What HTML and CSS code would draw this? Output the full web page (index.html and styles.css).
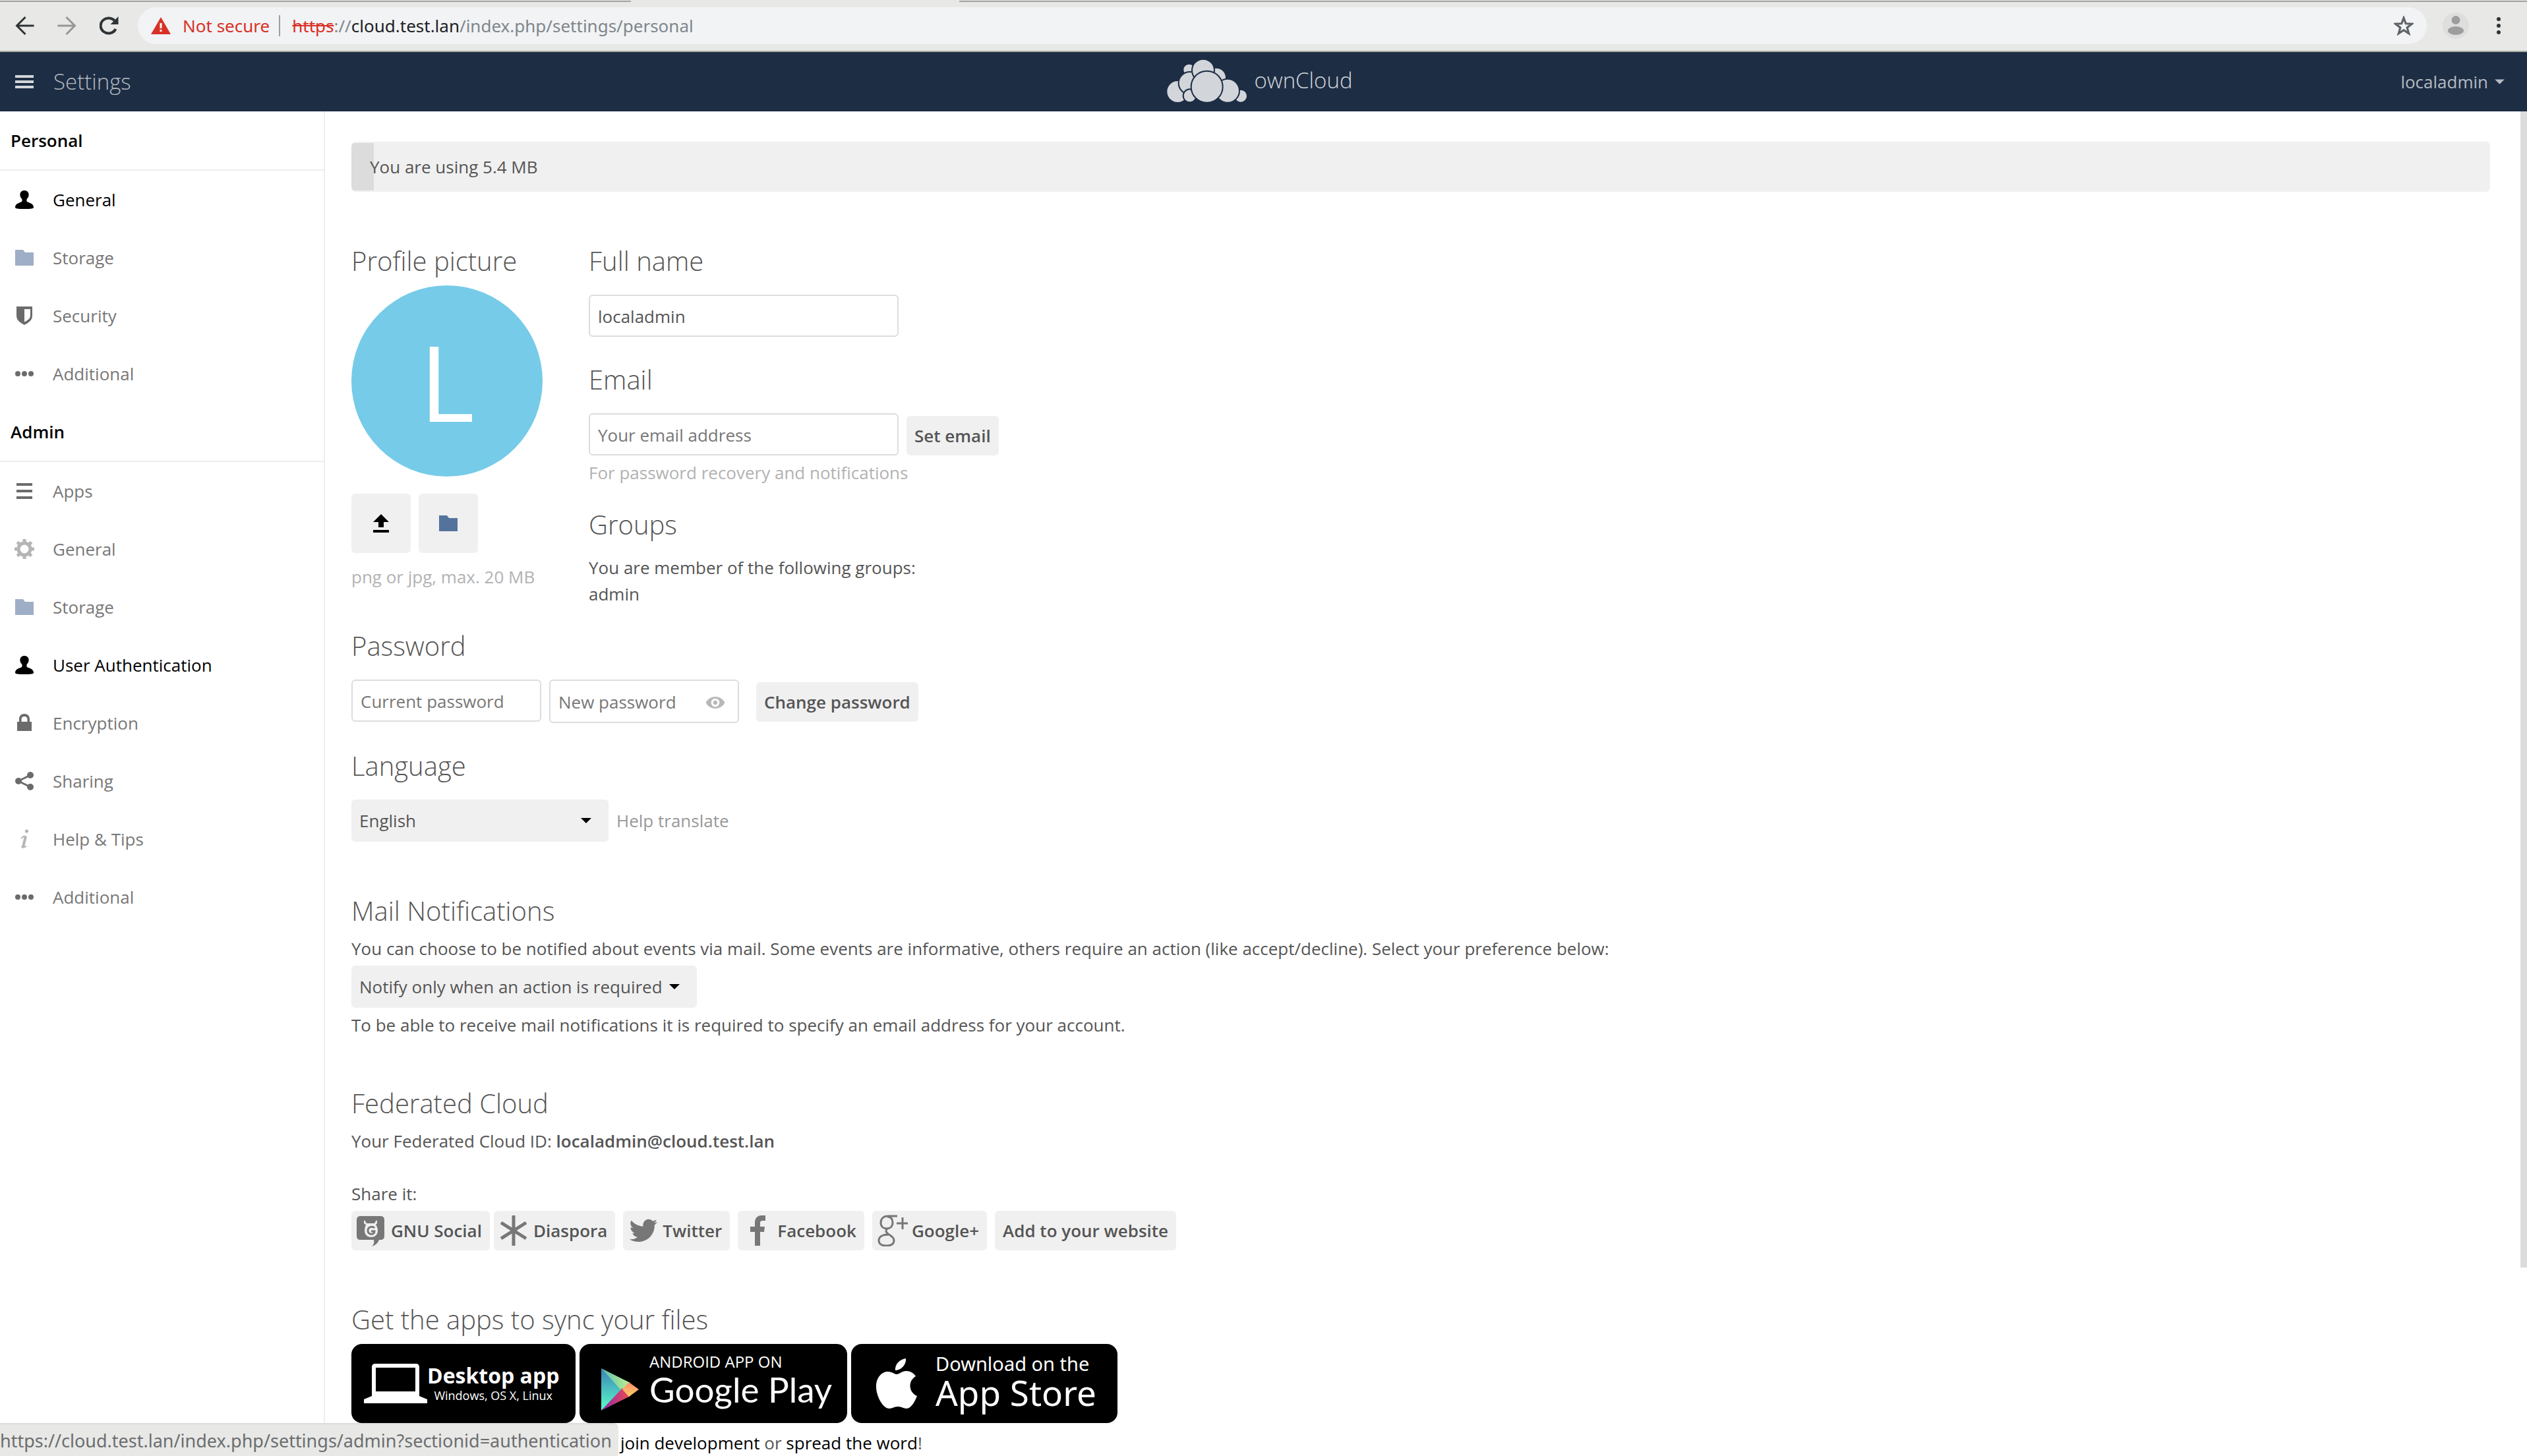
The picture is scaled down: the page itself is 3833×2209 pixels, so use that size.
FILE: index.html
```html
<!DOCTYPE html>
<html lang="en">
<head>
<meta charset="utf-8">
<title>Settings - ownCloud</title>
<link rel="stylesheet" href="styles.css">
</head>
<body>
<svg class="sprite" aria-hidden="true">
  <symbol id="i-user" viewBox="0 0 32 32"><path d="M16 2c-4 0-6.600 2.500-6.600 6.500 0 3 1 4.500 2.600 6 .8 1 .8 3.500 0 4.500-2 1.500-10 2.500-10 8.500 0 2 4 2.500 14 2.500s14-.5 14-2.500c0-6-8-7-10-8.500-.8-1-.8-3.500 0-4.500 1.600-1.500 2.600-3 2.600-6C22.600 4.500 20 2 16 2z"/></symbol>
  <symbol id="i-folder" viewBox="0 0 32 32"><path d="M2 4h12l3 4h13v20H2z"/></symbol>
  <symbol id="i-shield" viewBox="0 0 32 32"><path fill-rule="evenodd" d="M4 2h24v14c0 7-6 11-12 14C10 27 4 23 4 16zM16 6v19.500c5-2.500 9-5 9-10V6z"/></symbol>
  <symbol id="i-more" viewBox="0 0 32 32"><circle cx="6" cy="16" r="4"/><circle cx="16" cy="16" r="4"/><circle cx="26" cy="16" r="4"/></symbol>
  <symbol id="i-menu" viewBox="0 0 32 32"><path d="M4 4h24v4H4zM4 14h24v4H4zM4 24h24v4H4z"/></symbol>
  <symbol id="i-gear" viewBox="0 0 32 32"><circle cx="16" cy="16" r="9" fill="none" stroke="currentColor" stroke-width="5"/><path fill="none" stroke="currentColor" stroke-width="5" d="M16 1v5M16 26v5M1 16h5M26 16h5M5.400 5.400l3.500 3.500M23.100 23.100l3.500 3.500M26.600 5.400l-3.500 3.500M8.900 23.100l-3.500 3.500"/></symbol>
  <symbol id="i-lock" viewBox="0 0 32 32"><path fill-rule="evenodd" d="M16 2c-5 0-8 3.500-8 8v4H5v14h22V14h-3v-4c0-4.500-3-8-8-8zm0 4c3 0 4.500 2 4.500 4.500V14h-9v-3.500C11.500 8 13 6 16 6z"/></symbol>
  <symbol id="i-share" viewBox="0 0 32 32"><circle cx="7" cy="16" r="5"/><circle cx="25" cy="7" r="5"/><circle cx="25" cy="25" r="5"/><path fill="none" stroke="currentColor" stroke-width="3" d="M25 7L7 16l18 9"/></symbol>
  <symbol id="i-info" viewBox="0 0 32 32"><circle cx="19.500" cy="4" r="2.600"/><path fill="none" stroke="currentColor" stroke-width="2" d="M11 15c2-2 4-3.500 6-3.500M12 27c0 3 4 2 7-.5"/><path fill="none" stroke="currentColor" stroke-width="4" d="M18 11.500L14 28"/></symbol>
  <symbol id="i-caret" viewBox="0 0 16 8"><path d="M0 0h16L8 8z"/></symbol>
</svg>

<div class="browser">
  <div class="tab-edge"></div>
  <div class="toolbar">
    <button class="tool" aria-label="Back"><svg viewBox="0 0 28 28"><path d="M28 14H3M15 1L2 14l13 13" fill="none" stroke="#2e3436" stroke-width="3"/></svg></button>
    <button class="tool" aria-label="Forward"><svg viewBox="0 0 28 28"><path d="M0 14h25M13 1l13 13-13 13" fill="none" stroke="#969896" stroke-width="3"/></svg></button>
    <button class="tool" aria-label="Reload"><svg viewBox="0 0 28 28"><path d="M24 19a12 11.500 0 1 1 0-10" fill="none" stroke="#2e3436" stroke-width="4"/><path d="M28 0v12H16z" fill="#2e3436"/></svg></button>
    <div class="omnibox">
      <svg class="warn" viewBox="0 0 30 26"><path d="M15 0l15 26H0z" fill="#d93025"/><path d="M13.500 9h3v8h-3zM13.500 19h3v3h-3z" fill="#fff"/></svg>
      <span class="insecure">Not secure</span>
      <span class="divider"></span>
      <span class="url"><s>https</s>://<b>cloud.test.lan</b>/index.php/settings/personal</span>
      <button class="star" aria-label="Bookmark this page"><svg viewBox="0 0 28 28"><path d="M14 3l3 8 8.500.4-6.700 5.300L21.200 25 14 20.300 6.800 25l2.400-8.300L2.500 11.400 11 11z" fill="none" stroke="#5f6368" stroke-width="3"/></svg></button>
    </div>
    <button class="account" aria-label="Profile"><svg viewBox="0 0 40 40"><circle cx="20" cy="20" r="20" fill="#dededf"/><circle cx="20" cy="11.500" r="6.500" fill="#9d9d9d"/><ellipse cx="20" cy="27.500" rx="12" ry="6.500" fill="#9d9d9d"/></svg></button>
    <button class="dots" aria-label="Browser menu"><svg viewBox="0 0 6 28"><g fill="#2e3436"><circle cx="3" cy="4" r="3"/><circle cx="3" cy="14" r="3"/><circle cx="3" cy="24" r="3"/></g></svg></button>
  </div>
</div>

<header class="header">
  <button class="app-menu"><svg viewBox="0 0 28 20"><path d="M0 0h28v4H0zM0 8h28v4H0zM0 16h28v4H0z" fill="#d3d6da"/></svg>Settings</button>
  <a class="brand" href="#">
    <svg viewBox="366 267 366 201"><g fill="#d2d5da" stroke="#1d2d44" stroke-width="6"><circle cx="467" cy="318" r="28"/><circle cx="590" cy="354" r="46"/><circle cx="415" cy="417" r="51"/><circle cx="470" cy="378" r="51"/><circle cx="531" cy="320" r="51"/><circle cx="702" cy="437" r="30"/><circle cx="642" cy="413" r="54"/><circle cx="470" cy="436" r="30"/><circle cx="548" cy="395" r="72"/></g></svg>
    ownCloud</a>
  <button class="user-menu">localadmin<svg viewBox="0 0 16 8"><use href="#i-caret"/></svg></button>
</header>

<div class="app">
  <nav class="sidebar">
    <h2 class="nav-title">Personal</h2>
    <ul>
      <li><a class="active" href="#"><svg><use href="#i-user"/></svg>General</a></li>
      <li><a href="#"><svg class="folder"><use href="#i-folder"/></svg>Storage</a></li>
      <li><a href="#"><svg><use href="#i-shield"/></svg>Security</a></li>
      <li><a href="#"><svg><use href="#i-more"/></svg>Additional</a></li>
    </ul>
    <h2 class="nav-title">Admin</h2>
    <ul>
      <li><a href="#"><svg><use href="#i-menu"/></svg>Apps</a></li>
      <li><a href="#"><svg class="faint"><use href="#i-gear"/></svg>General</a></li>
      <li><a href="#"><svg class="folder"><use href="#i-folder"/></svg>Storage</a></li>
      <li><a class="active" href="#"><svg><use href="#i-user"/></svg>User Authentication</a></li>
      <li><a href="#"><svg><use href="#i-lock"/></svg>Encryption</a></li>
      <li><a href="#"><svg><use href="#i-share"/></svg>Sharing</a></li>
      <li><a href="#"><svg class="faint"><use href="#i-info"/></svg>Help &amp; Tips</a></li>
      <li><a href="#"><svg><use href="#i-more"/></svg>Additional</a></li>
    </ul>
  </nav>

  <main class="content">
    <div class="quota"><div class="quota-used"></div><span>You are using 5.4 MB</span></div>

    <div class="profile">
      <section>
        <h2>Profile picture</h2>
        <div class="avatar">L</div>
        <div class="avatar-actions">
          <button aria-label="Upload new"><svg viewBox="0 0 32 32"><path d="M16 2l12 12h-8v8h-8v-8H4zM4 26h24v4H4z"/></svg></button>
          <button aria-label="Select from Files"><svg class="folder-solid"><use href="#i-folder"/></svg></button>
        </div>
        <p class="hint">png or jpg, max. 20 MB</p>
      </section>
      <div>
        <section>
          <h2><label for="fullname">Full name</label></h2>
          <div class="controls"><input id="fullname" class="wide" type="text" value="localadmin"></div>
        </section>
        <section class="email">
          <h2><label for="email">Email</label></h2>
          <div class="controls"><input id="email" class="wide" type="email" placeholder="Your email address"><button class="button">Set email</button></div>
          <p class="hint">For password recovery and notifications</p>
        </section>
        <section class="groups">
          <h2>Groups</h2>
          <p>You are member of the following groups:<br>admin</p>
        </section>
      </div>
    </div>

    <section class="password">
      <h2>Password</h2>
      <div class="controls">
        <input type="password" aria-label="Current password" placeholder="Current password">
        <div class="new-password">
          <input type="password" aria-label="New password" placeholder="New password">
          <svg viewBox="0 0 32 20"><path fill-rule="evenodd" d="M16 0C9 0 3 4 0 10c3 6 9 10 16 10s13-4 16-10C29 4 23 0 16 0zm0 3a7 7 0 1 1 0 14 7 7 0 0 1 0-14z"/><circle cx="16" cy="10" r="3.500"/></svg>
        </div>
        <button class="button">Change password</button>
      </div>
    </section>

    <section class="language">
      <h2><label for="language">Language</label></h2>
      <div class="controls">
        <div class="select select-language"><select id="language"><option>English</option></select><svg viewBox="0 0 16 8"><use href="#i-caret"/></svg></div>
        <a class="help" href="#">Help translate</a>
      </div>
    </section>

    <section class="mail">
      <h2>Mail Notifications</h2>
      <p><label for="notify">You can choose to be notified about events via mail. Some events are informative, others require an action (like accept/decline). Select your preference below:</label></p>
      <div class="select select-notify"><select id="notify"><option>Notify only when an action is required</option></select><svg viewBox="0 0 16 8"><use href="#i-caret"/></svg></div>
      <p>To be able to receive mail notifications it is required to specify an email address for your account.</p>
    </section>

    <section class="federated">
      <h2>Federated Cloud</h2>
      <p>Your Federated Cloud ID: <strong>localadmin@cloud.test.lan</strong></p>
      <p class="share-label">Share it:</p>
      <div class="share">
        <button class="button social tight"><svg viewBox="0 0 48 48"><path d="M8 2h30c4 0 6 2 6 6v24c0 4-2 6-6 6h-2c-2 5-5 8-11 10 3-3 4-6 3-10H8c-4 0-6-2-6-6V8c0-4 2-6 6-6z"/><path fill="#efefef" d="M14 8l3 5h12l3-5c2 3 1 6-1 7 2 3 3 6 3 9 0 6-4 10-10 10s-10-4-10-10c0-3 1-6 2-9-3-1-4-4-2-7z"/><path fill="none" stroke="currentColor" stroke-width="3" d="M29 20c-3-3-10-2-10 4 0 7 10 7 10 1h-5"/></svg>GNU Social</button>
        <button class="button social"><svg viewBox="0 0 48 48"><path fill="none" stroke="currentColor" stroke-width="5" d="M24 1v46M5 12l38 24M43 12L5 36"/></svg>Diaspora</button>
        <button class="button social"><svg viewBox="0 0 24 24"><path d="M23 5.500c-.8.400-1.600.6-2.500.7.900-.5 1.600-1.400 1.900-2.400-.8.500-1.800.9-2.700 1.100a4.300 4.300 0 0 0-7.400 3.900C8.700 8.600 5.500 6.900 3.300 4.200a4.300 4.300 0 0 0 1.300 5.800c-.7 0-1.400-.2-1.900-.5 0 2 1.400 3.900 3.400 4.300-.6.200-1.300.2-1.900.1.500 1.700 2.100 3 4 3A8.700 8.700 0 0 1 2 18.600a12.200 12.200 0 0 0 6.600 1.900c8 0 12.600-6.700 12.300-12.800.8-.6 1.600-1.300 2.100-2.200z"/></svg>Twitter</button>
        <button class="button social"><svg viewBox="0 0 48 48"><path d="M20 47V26h-7v-8h7v-6C20 5 24 1 30 1h6v8h-4c-3 0-4 1-4 4v5h7l-1 8h-6v21z"/></svg>Facebook</button>
        <button class="button social"><svg viewBox="0 0 48 48"><path fill="none" stroke="currentColor" stroke-width="3" d="M32 2H18C11 2 7 6 7 12s4 9 9 9 9-3 9-9-3-9-8-9M17 21c-3 3-3 5 1 8 6 4 9 6 9 10 0 5-4 8-12 8-7 0-11-3-11-8 0-6 6-9 15-9M40 4v18M31 13h17"/></svg>Google+</button>
        <button class="button">Add to your website</button>
      </div>
    </section>

    <section class="apps">
      <h2>Get the apps to sync your files</h2>
      <div class="badges">
        <a class="badge desktop" href="#">
          <svg viewBox="0 0 96 60"><path fill="#fff" fill-rule="evenodd" d="M17 0h62c3 0 5 2 5 5v44l12 5v6H0v-6l12-5V5c0-3 2-5 5-5zm1 6v36h60V6z"/></svg>
          <span class="badge-text"><strong>Desktop app</strong><small>Windows, OS X, Linux</small></span>
        </a>
        <a class="badge play" href="#">
          <svg viewBox="0 0 57 64"><defs><linearGradient id="g1" x2="0" y2="1"><stop stop-color="#3b80b8"/><stop offset="1" stop-color="#5bffc8"/></linearGradient><linearGradient id="g2"><stop stop-color="#5cc0b0"/><stop offset="1" stop-color="#bdf090"/></linearGradient><linearGradient id="g3"><stop stop-color="#8a2bb0"/><stop offset="1" stop-color="#f04a50"/></linearGradient><linearGradient id="g4" x2="0" y2="1"><stop stop-color="#ff8a6c"/><stop offset="1" stop-color="#ffcf68"/></linearGradient></defs><path d="M0 0l32 32L0 64z" fill="url(#g1)"/><path d="M0 0l44 22-12 13z" fill="url(#g2)"/><path d="M0 64l44-22-12-12z" fill="url(#g3)"/><path d="M42 21l15 11-15 11-10-11z" fill="url(#g4)"/></svg>
          <span class="badge-text"><small>ANDROID APP ON</small><strong>Google Play</strong></span>
        </a>
        <a class="badge store" href="#">
          <svg viewBox="0 0 62 76"><path fill="#fff" d="M45 0c1 9-7 18-16 18-1-9 7-17 16-18zM31 24c4 0 8-5 15-5 5 0 11 3 14 8-13 8-10 25 2 30-3 8-9 19-16 19-5 0-7-3-13-3s-8 3-13 3C10 76 0 57 0 43c0-15 9-23 18-23 6 0 10 4 13 4z"/></svg>
          <span class="badge-text"><small>Download on the</small><strong>App Store</strong></span>
        </a>
      </div>
      <p class="support"><a href="#">join development</a> or <a href="#">spread the word</a>!</p>
    </section>
    <div class="scrollbar"></div>
  </main>
</div>
<div class="status">https://cloud.test.lan/index.php/settings/admin?sectionid=authentication</div>
</body>
</html>
```
FILE: styles.css
```css
* { box-sizing: border-box; }

body {
  margin: 0;
  height: 100vh;
  display: flex;
  flex-direction: column;
  overflow: hidden;
  background: #fff;
  color: #555;
  font: 26px/40px "Open Sans", sans-serif;
}

h2, p, ul { margin: 0; padding: 0; }
ul { list-style: none; }
a { color: inherit; text-decoration: none; }
svg { display: block; fill: currentColor; flex: none; }
strong { font-weight: 600; }
.sprite { position: absolute; width: 0; height: 0; }

button, input, select { font: inherit; color: inherit; margin: 0; }
button { border: 0; padding: 0; background: none; }

/* Browser toolbar */
.browser {
  flex: none;
  padding-top: 1px;
  background: #e8e8e6;
  border-bottom: 2px solid #a9aca1;
  font-family: "Noto Sans", sans-serif;
}
.tab-edge {
  height: 2px;
  background: linear-gradient(90deg, #a0a3a0 957px, transparent 957px 1455px, #a0a3a0 1455px);
}
.toolbar {
  display: flex;
  align-items: center;
  padding: 8px 40px 10px 23px;
}
.tool { margin-right: 35px; }
.tool svg { width: 29px; height: 28px; }
.omnibox {
  flex: 1;
  display: flex;
  align-items: center;
  height: 56px;
  margin-left: -6px;
  padding: 0 20px;
  border-radius: 28px;
  background: #f1f3f5;
}
.warn { width: 30px; height: 26px; }
.insecure { margin-left: 18px; color: #d93025; }
.divider { width: 2px; height: 32px; margin: 0 18px 0 14px; background: #9aa0a6; }
.url { flex: 1; color: #80868b; }
.url b { font-weight: 400; color: #202124; }
.url s { color: #d93025; }
.star svg { width: 30px; height: 30px; }
.account { margin-left: 24px; }
.account svg { width: 40px; height: 40px; }
.dots { margin-left: 42px; }
.dots svg { width: 6px; height: 28px; }

/* Application header */
.header {
  flex: none;
  display: grid;
  grid-template-columns: 1fr auto 1fr;
  align-items: center;
  height: 90px;
  padding: 0 34px 0 23px;
  background: #1d2d44;
  color: #b5bac1;
}
.app-menu {
  justify-self: start;
  display: flex;
  align-items: center;
  gap: 30px;
  font-size: 33px;
  font-weight: 300;
}
.app-menu svg { width: 28px; height: 20px; }
.brand {
  display: flex;
  align-items: center;
  gap: 10px;
  padding-bottom: 4px;
  font-size: 33px;
  font-weight: 300;
  color: #d2d5da;
}
.brand svg { width: 122px; height: 67px; }
.user-menu {
  justify-self: end;
  display: flex;
  align-items: center;
  gap: 10px;
}
.user-menu svg { width: 15px; height: 8px; }

/* Sidebar */
.app { flex: 1; display: flex; min-height: 0; }
.sidebar {
  flex: none;
  width: 493px;
  border-right: 2px solid #eee;
  color: #777;
}
.nav-title {
  padding-left: 16px;
  border-bottom: 2px solid #eee;
  font-size: 26px;
  line-height: 88px;
  font-weight: 600;
  color: #000;
}
.sidebar a {
  display: flex;
  align-items: center;
  gap: 27px;
  padding-left: 21px;
  line-height: 88px;
}
.sidebar svg { width: 32px; height: 32px; color: #6b6b6b; }
.sidebar .active, .sidebar .active svg { color: #000; }
.sidebar .folder { color: #9eaec6; }
.sidebar .faint { color: #b5b5b5; }

/* Content */
.content {
  position: relative;
  flex: 1;
  min-width: 0;
  overflow: hidden;
  padding: 46px 56px 0 40px;
}
.content h2 { font-size: 40px; line-height: 50px; font-weight: 300; }
.scrollbar {
  position: absolute;
  top: 0;
  right: 0;
  width: 10px;
  height: 86%;
  background: #dcdcdc;
}
.hint { color: #b2b2b2; }

.quota {
  position: relative;
  height: 76px;
  padding-left: 28px;
  border-radius: 6px;
  background: #f0f0f0;
  line-height: 76px;
}
.quota-used {
  position: absolute;
  left: 0;
  top: 2px;
  bottom: 2px;
  width: 34px;
  border-radius: 6px 0 0 6px;
  background: #dcdcdc;
}
.quota span { position: relative; }

.profile {
  display: grid;
  grid-template-columns: 290px 1fr;
  column-gap: 70px;
  margin-top: 80px;
}
.avatar {
  width: 290px;
  height: 290px;
  margin-top: 12px;
  border-radius: 50%;
  background: #76cbe8;
  color: #fff;
  font-size: 160px;
  line-height: 290px;
  text-align: center;
}
.avatar-actions { display: flex; gap: 12px; margin: 26px 0 16px; }
.avatar-actions button {
  display: grid;
  place-items: center;
  width: 90px;
  height: 90px;
  border-radius: 6px;
  background: #f0f0f0;
  color: #000;
}
.avatar-actions svg { width: 32px; height: 32px; }
.avatar-actions .folder-solid { color: #54739c; }

.controls { display: flex; align-items: flex-start; gap: 12px; margin-top: 26px; }
input {
  width: 288px;
  height: 64px;
  padding: 2px 12px 0;
  border: 2px solid #ddd;
  border-radius: 6px;
  background: #fff;
}
input::placeholder { color: #777; opacity: 1; }
input.wide { width: 470px; }
.button {
  height: 60px;
  padding: 0 12px;
  border-radius: 6px;
  background: #f0f0f0;
  font-weight: 600;
  white-space: nowrap;
}
.controls .button { margin-top: 4px; }

.email { margin-top: 40px; }
.email .hint { margin-top: 6px; }
.groups { margin-top: 34px; }
.groups p { margin-top: 20px; }
.password { margin-top: 34px; }
.new-password { position: relative; margin-right: 14px; }
.new-password input { display: block; height: 66px; }
.new-password svg {
  position: absolute;
  right: 20px;
  top: 26px;
  width: 32px;
  height: 18px;
  color: #b8b8b8;
}
.language { margin-top: 40px; }
.help { line-height: 64px; color: #999; }

.select { position: relative; color: #555; }
.select select {
  appearance: none;
  display: block;
  width: 100%;
  height: 64px;
  padding: 0 12px;
  border: 0;
  border-radius: 6px;
  background: #f0f0f0;
}
.select svg {
  position: absolute;
  right: 26px;
  top: 28px;
  width: 16px;
  height: 8px;
  color: #000;
  pointer-events: none;
}
.select-language { width: 390px; }
.select-notify { width: 524px; margin: 6px 0; }

.mail { margin-top: 80px; }
.mail h2, .federated h2, .apps h2 { margin-bottom: 12px; }
.federated { margin-top: 74px; }
.share-label { margin-top: 40px; }
.share { display: flex; gap: 12px; margin-top: 6px; }
.social { display: flex; align-items: center; gap: 6px; padding-left: 6px; }
.social svg { width: 48px; height: 48px; color: #777; }
.tight { margin-right: -6px; }

.apps { margin-top: 80px; }
.badges { display: flex; gap: 6px; }
.badge {
  display: flex;
  align-items: center;
  height: 120px;
  border-radius: 16px;
  background: #000;
  color: #fff;
  white-space: nowrap;
}
.badge-text { display: flex; flex-direction: column; }
.desktop { width: 340px; padding-left: 19px; }
.desktop svg { width: 96px; height: 60px; }
.desktop .badge-text { align-items: center; }
.desktop strong { font-size: 32px; line-height: 36px; font-weight: 700; }
.desktop small { font-size: 18px; line-height: 24px; }
.play { width: 406px; padding-left: 33px; }
.play svg { width: 57px; height: 64px; margin-top: 18px; }
.play .badge-text { margin: 0 0 12px 16px; }
.play small { font-size: 24px; line-height: 30px; }
.play strong { font-family: Lato, sans-serif; font-size: 53px; line-height: 54px; font-weight: 400; }
.store { width: 404px; padding-left: 38px; }
.store svg { width: 62px; height: 76px; }
.store .badge-text { margin: 0 0 6px 28px; font-family: "Noto Sans", sans-serif; }
.store small { font-size: 29px; line-height: 34px; }
.store strong { font-size: 53px; line-height: 54px; font-weight: 400; }
.support { margin-top: 10px; padding-left: 408px; white-space: nowrap; }
.support a { color: #000; }

/* Link target shown by the browser */
.status {
  position: fixed;
  left: 0;
  bottom: 0;
  height: 50px;
  padding-right: 10px;
  border-top: 2px solid #dcdcdb;
  border-top-right-radius: 8px;
  background: #e8e8e6;
  color: #6b6e70;
  font: 27px/50px "Noto Sans", sans-serif;
}
```
